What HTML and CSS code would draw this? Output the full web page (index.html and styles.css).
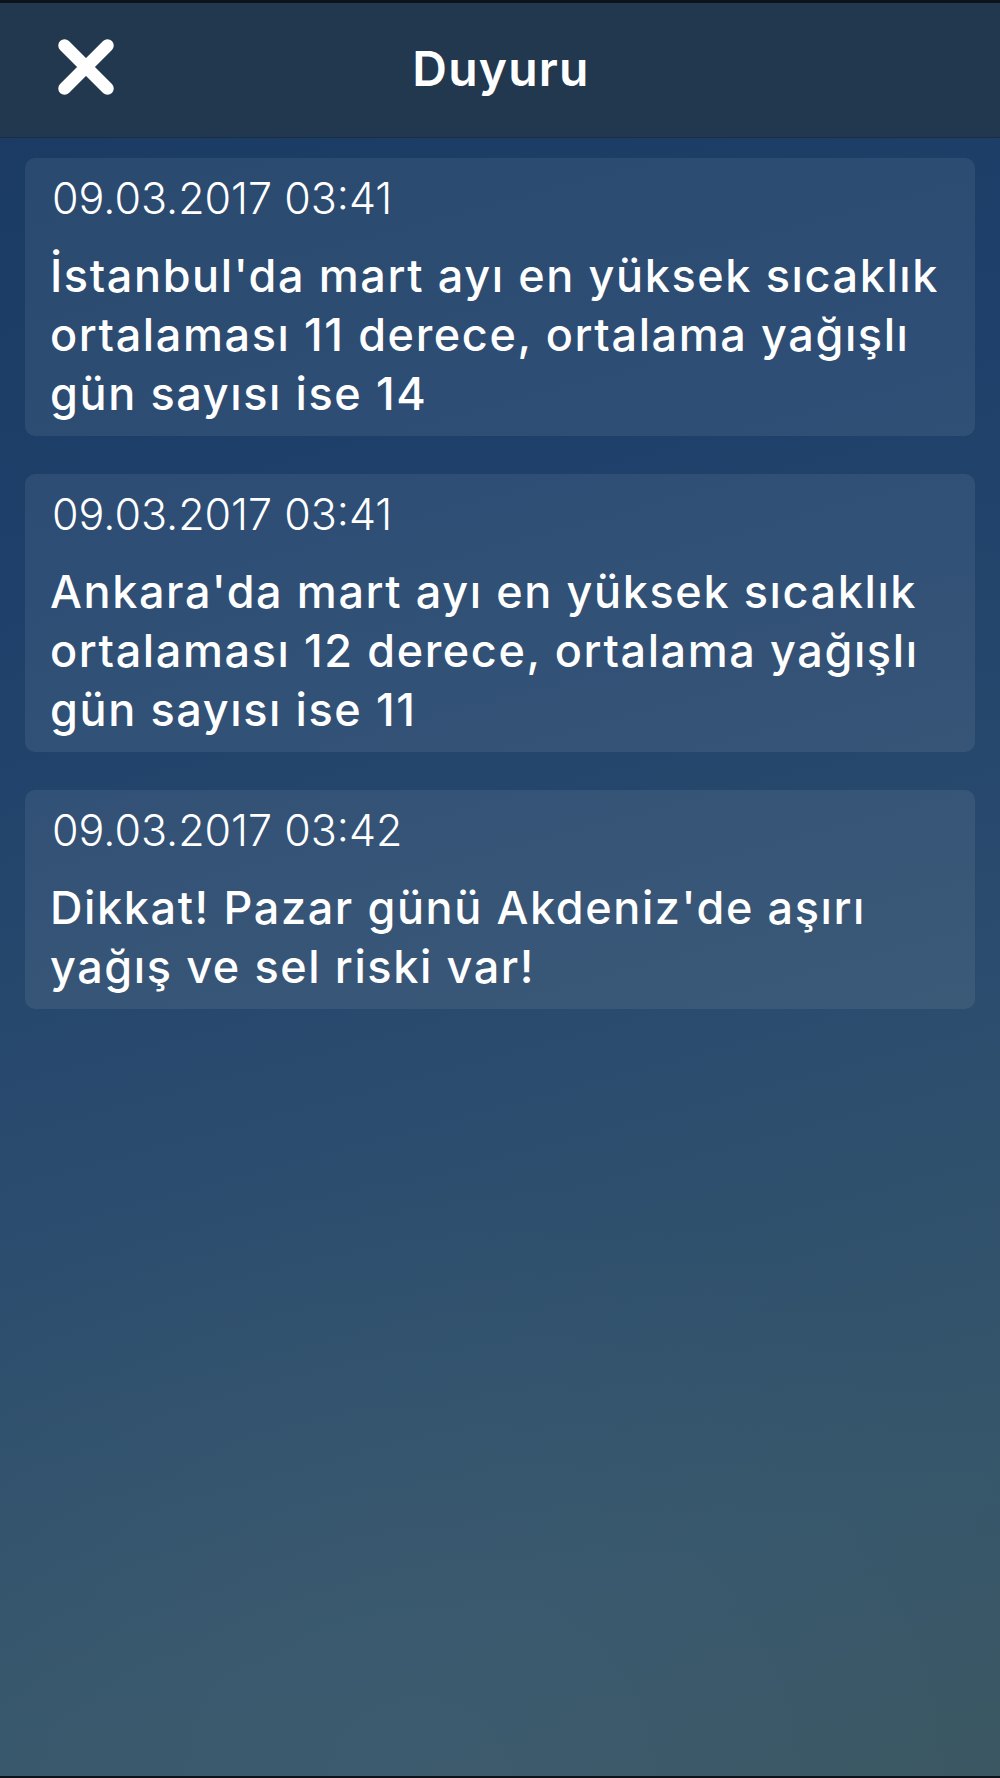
FILE: index.html
```html
<!DOCTYPE html>
<html lang="tr">
<head>
<meta charset="utf-8">
<title>Duyuru</title>
<link rel="stylesheet" href="styles.css">
</head>
<body>
<div class="screen">
  <header class="topbar">
    <button class="close" aria-label="Kapat">
      <svg width="56" height="56" viewBox="0 0 56 56"><path d="M6.5 6.5 L49.5 49.5 M49.5 6.5 L6.5 49.5" stroke="#fff" stroke-width="12.5" stroke-linecap="round" fill="none"/></svg>
    </button>
    <h1 class="title">Duyuru</h1>
    <span class="spacer"></span>
  </header>
  <main class="list">
    <article class="card">
      <div class="date">09.03.2017 03:41</div>
      <p class="msg">İstanbul'da mart ayı en yüksek sıcaklık ortalaması 11 derece, ortalama yağışlı gün sayısı ise 14</p>
    </article>
    <article class="card">
      <div class="date">09.03.2017 03:41</div>
      <p class="msg">Ankara'da mart ayı en yüksek sıcaklık ortalaması 12 derece, ortalama yağışlı gün sayısı ise 11</p>
    </article>
    <article class="card">
      <div class="date">09.03.2017 03:42</div>
      <p class="msg">Dikkat! Pazar günü Akdeniz'de aşırı yağış ve sel riski var!</p>
    </article>
  </main>
</div>
</body>
</html>
```
FILE: styles.css
```css
html, body {
  margin: 0;
  padding: 0;
}
body {
  width: 1000px;
  height: 1778px;
  overflow: hidden;
  font-family: "Inter", "Roboto", "Liberation Sans", sans-serif;
  color: #fff;
  background: #0c131b;
}
.screen {
  box-sizing: border-box;
  height: 1778px;
  border-top: 3px solid #0c131b;
  border-bottom: 2px solid #0c131b;
  display: flex;
  flex-direction: column;
  background:
    radial-gradient(ellipse 700px 600px at 42% 100%, rgba(70, 100, 125, 0.35), rgba(70, 100, 125, 0) 100%),
    linear-gradient(165deg, #1a3a62 0%, #1e406a 30%, #2b4c6e 60%, #36566a 85%, #3a5660 100%);
}
.topbar {
  height: 134px;
  flex: none;
  background: #22384f;
  border-bottom: 1px solid #1a2d42;
  display: grid;
  grid-template-columns: 1fr auto 1fr;
  align-items: center;
}
.close {
  justify-self: start;
  margin-left: 58px;
  margin-top: -6px;
  padding: 0;
  border: 0;
  background: none;
  width: 56px;
  height: 56px;
  display: block;
}
.close svg { display: block; }
.title {
  margin: 0;
  font-size: 48px;
  font-weight: 600;
  letter-spacing: 1.2px;
  margin-left: 2px;
  margin-top: -4px;
}
.list {
  display: flex;
  flex-direction: column;
  gap: 38px;
  padding: 20px 25px 0;
}
.card {
  background: rgba(255, 255, 255, 0.075);
  border-radius: 10px;
  padding: 15px 26px 13px 25px;
}
.date {
  font-size: 43px;
  font-weight: 300;
  line-height: 50px;
  padding-left: 2px;
}
.msg {
  margin: 23px 0 0;
  font-size: 45px;
  font-weight: 500;
  letter-spacing: 1.6px;
  line-height: 59px;
}
```
